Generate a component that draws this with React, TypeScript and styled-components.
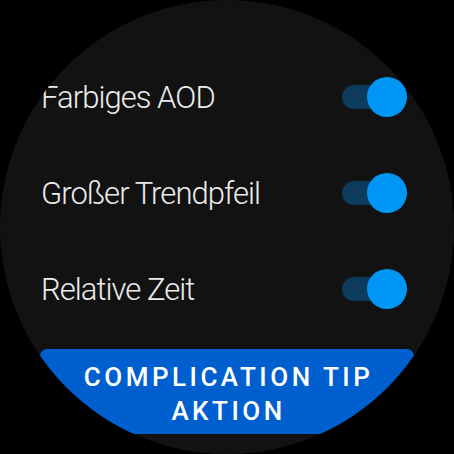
import styled, { createGlobalStyle } from 'styled-components';

const GlobalStyle = createGlobalStyle`
  html, body {
    margin: 0;
    padding: 0;
    background: #000;
  }
  body {
    font-family: Roboto, "Noto Sans", sans-serif;
  }
`;

const Screen = styled.div`
  width: 454px;
  height: 454px;
  border-radius: 50%;
  overflow: hidden;
  background: #121212;
  display: flex;
  flex-direction: column;
  padding-top: 49px;
  box-sizing: border-box;
`;

const Row = styled.div`
  height: 96px;
  display: flex;
  align-items: center;
  justify-content: space-between;
  padding: 0 47px 0 41px;
`;

const Label = styled.span`
  margin-top: 2px;
  color: #ececec;
  font-size: 31px;
  font-weight: 300;
  line-height: 30px;
  letter-spacing: -0.95px;
  white-space: nowrap;
`;

const Toggle = styled.div`
  position: relative;
  width: 65px;
  height: 40px;
  display: flex;
  align-items: center;
`;

const Track = styled.div`
  width: 56px;
  height: 24px;
  border-radius: 12px;
  background: #0c3b5c;
`;

const Thumb = styled.div<{ $on: boolean }>`
  position: absolute;
  top: 0;
  ${({ $on }) => ($on ? 'right: 0;' : 'left: 0;')}
  width: 40px;
  height: 40px;
  border-radius: 50%;
  background: ${({ $on }) => ($on ? '#0096f5' : '#9e9e9e')};
`;

const ActionButton = styled.button`
  margin: 12px 40px 0;
  padding: 11px 0 6px 3px;
  border: none;
  border-radius: 7px 7px 0 0;
  background: #005fcf;
  color: #fff;
  font-family: Roboto, "Noto Sans", sans-serif;
  font-size: 26px;
  font-weight: 500;
  line-height: 34px;
  letter-spacing: 3.5px;
  text-align: center;
`;

const settings = [
  { label: 'Farbiges AOD', on: true },
  { label: 'Großer Trendpfeil', on: true },
  { label: 'Relative Zeit', on: true },
];

export default function App() {
  return (
    <>
      <GlobalStyle />
      <Screen>
        {settings.map((s) => (
          <Row key={s.label}>
            <Label>{s.label}</Label>
            <Toggle>
              <Track />
              <Thumb $on={s.on} />
            </Toggle>
          </Row>
        ))}
        <ActionButton>
          COMPLICATION TIP
          <br />
          AKTION
        </ActionButton>
      </Screen>
    </>
  );
}
